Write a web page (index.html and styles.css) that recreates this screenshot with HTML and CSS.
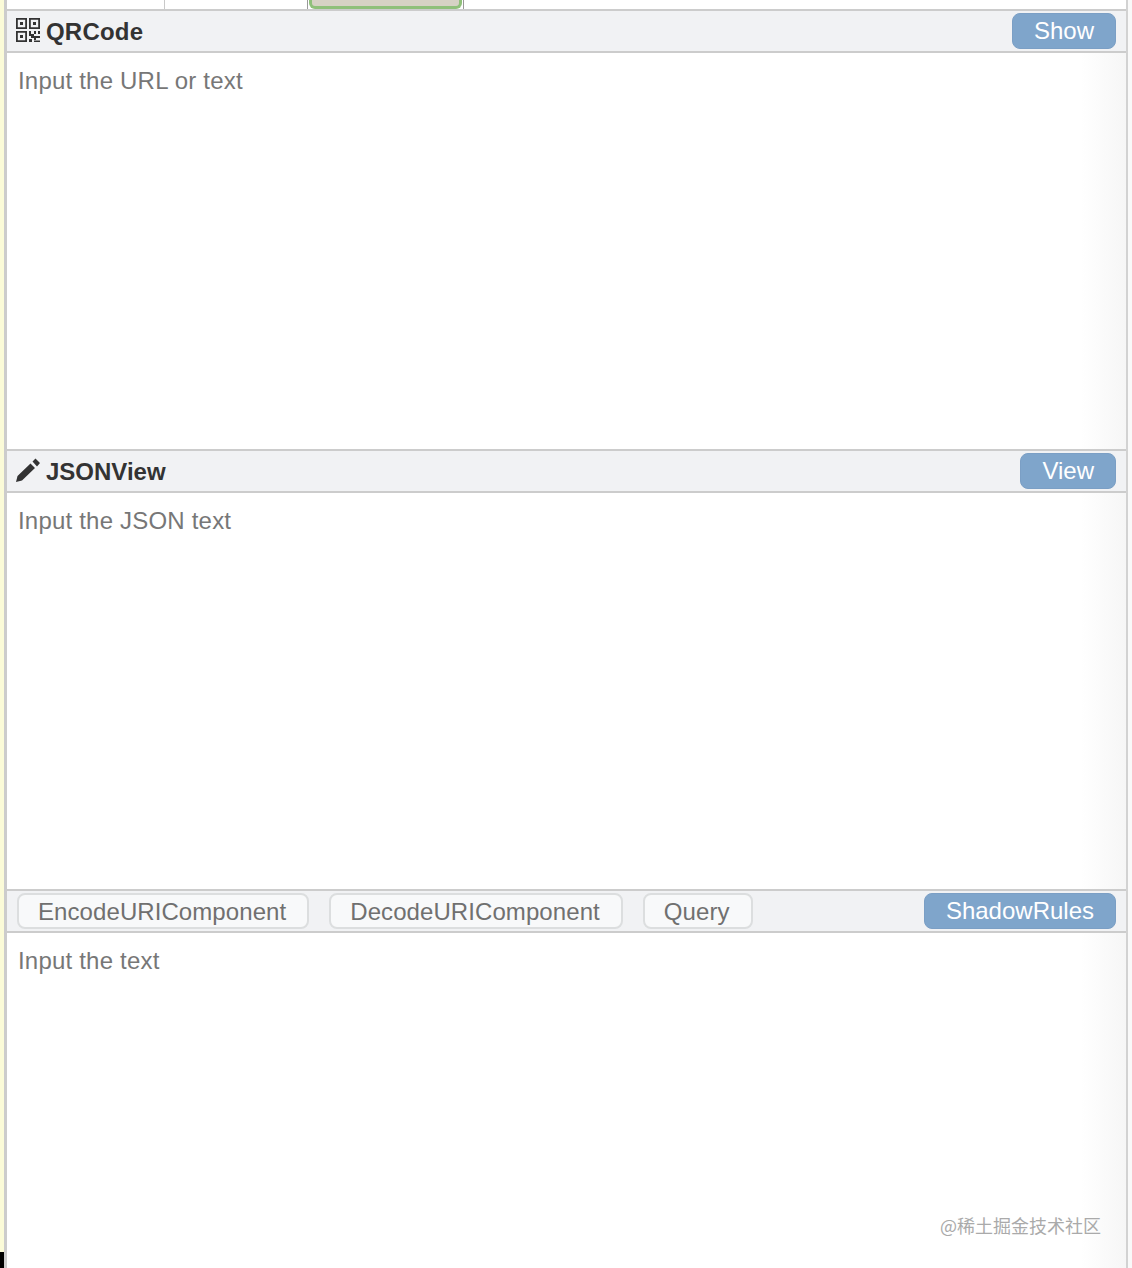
FILE: index.html
```html
<!DOCTYPE html>
<html lang="en">
<head>
<meta charset="utf-8">
<title>Tools</title>
<link rel="stylesheet" href="styles.css">
</head>
<body>
<div class="page">
  <aside class="strip"><div class="strip-end"></div></aside>
  <main class="main">
    <nav class="tabs">
      <div class="tab tab-first"></div>
      <div class="tab tab-second"></div>
      <div class="tab-active"><div class="tab-active-fill"></div></div>
    </nav>
    <section class="tool">
      <header class="bar">
        <svg class="icon" viewBox="0 0 24 24" aria-hidden="true">
          <path fill="#333" fill-rule="evenodd" d="M0 0h11v11H0zM1.800 1.800v7.400h7.400V1.800zM4 4h3v3H4zM13 0h11v11H13zM14.800 1.800v7.400h7.400V1.800zM17 4h3v3h-3zM0 13h11v11H0zM1.800 14.800v7.400h7.400v-7.400zM4 17h3v3H4z"/>
          <path fill="#333" d="M13 13h2v3h3v-3h2v3h-2v2h6v2h-4v2h-2v-2h-3v-2h-2zM22 13h2v3h-2zM13 21h3v3h-3zM18 22.500h6V24h-6z"/>
        </svg>
        <span class="title title-qr">QRCode</span>
        <button class="btn btn-primary btn-end">Show</button>
      </header>
      <textarea class="input" placeholder="Input the URL or text"></textarea>
    </section>
    <section class="tool">
      <header class="bar">
        <svg class="icon" viewBox="0 0 24 24" aria-hidden="true">
          <path fill="#333" d="M0 24l1.500-6L14.500 5.500l4.500 4.500L6 22.500zM16.500 3.500L19.500.5 24 5l-3 3.500z"/>
        </svg>
        <span class="title">JSONView</span>
        <button class="btn btn-primary btn-end">View</button>
      </header>
      <textarea class="input" placeholder="Input the JSON text"></textarea>
    </section>
    <section class="tool tool-last">
      <header class="bar bar-actions">
        <button class="btn btn-plain">EncodeURIComponent</button>
        <button class="btn btn-plain">DecodeURIComponent</button>
        <button class="btn btn-plain">Query</button>
        <button class="btn btn-primary btn-end">ShadowRules</button>
      </header>
      <textarea class="input" placeholder="Input the text"></textarea>
      <div class="watermark">@稀土掘金技术社区</div>
    </section>
  </main>
  <div class="gutter"></div>
</div>
</body>
</html>
```
FILE: styles.css
```css
* { box-sizing: border-box; }
html, body { margin: 0; height: 100%; overflow: hidden; background: #fff; }
body { font-family: "Liberation Sans", Arial, sans-serif; }
.page { display: flex; height: 1268px; }
.strip { width: 4px; background: #fbfbd8; display: flex; flex-direction: column; justify-content: flex-end; }
.strip-end { height: 16px; background: #000; }
.main { width: 1124px; border-left: 3px solid #cccccc; border-right: 2px solid #d2d2d2; display: flex; flex-direction: column; position: relative; }
.gutter { width: 4px; background: #f9f9f9; }
.tabs { height: 9px; display: flex; }
.tab { border-right: 1px solid #c9c9c9; }
.tab-first { width: 158px; }
.tab-second { width: 142px; border-right: 0; }
.tab-active { width: 157px; height: 10px; padding: 0 1px 1px; background: #fff; border-left: 1px solid #999; border-right: 1px solid #999; }
.tab-active-fill { height: 100%; background: #d6d2c4; border: 3px solid #8fc07a; border-top: 0; border-radius: 0 0 6px 6px; }
.tool { height: 440px; display: flex; flex-direction: column; border-top: 2px solid #cccccc; position: relative; }
.tool-last { flex: 1; height: auto; }
.bar { height: 42px; flex: none; display: flex; align-items: center; padding: 0 10px 0 9px; background: #f1f2f4; border-bottom: 2px solid #cccccc; }
.icon { width: 24px; height: 24px; flex: none; margin: 0 6px 2px 0; }
.title { font-size: 24px; font-weight: 700; color: #333; padding-top: 1px; }
.title-qr { letter-spacing: 0.2px; }
.btn { height: 36px; margin: 0; padding: 0 21px; font: 24px "Liberation Sans", Arial, sans-serif; border-radius: 8px; cursor: pointer; }
.btn-primary { color: #fff; background: #7fa5cb; border: 1px solid #7b9fc5; }
.btn-end { margin-left: auto; }
.btn-plain { color: #707070; background: #f8f9fa; border: 2px solid #dcdedf; margin-right: 20px; padding: 1px 21px 0 19px; letter-spacing: 0.08px; }
.bar-actions { padding-left: 10px; }
.input { flex: 1; display: block; width: 100%; border: 0; outline: 0; resize: none; padding: 14px 11px; font: 24px "Liberation Sans", Arial, sans-serif; line-height: 28px; letter-spacing: 0.2px; background: linear-gradient(90deg, #fff 96%, #f6f6f6 100%); }
.input::placeholder { color: #777; opacity: 1; }
.watermark { position: absolute; right: 25px; bottom: 30px; font: 18px "Noto Sans CJK SC", sans-serif; color: #aaa; }
```
